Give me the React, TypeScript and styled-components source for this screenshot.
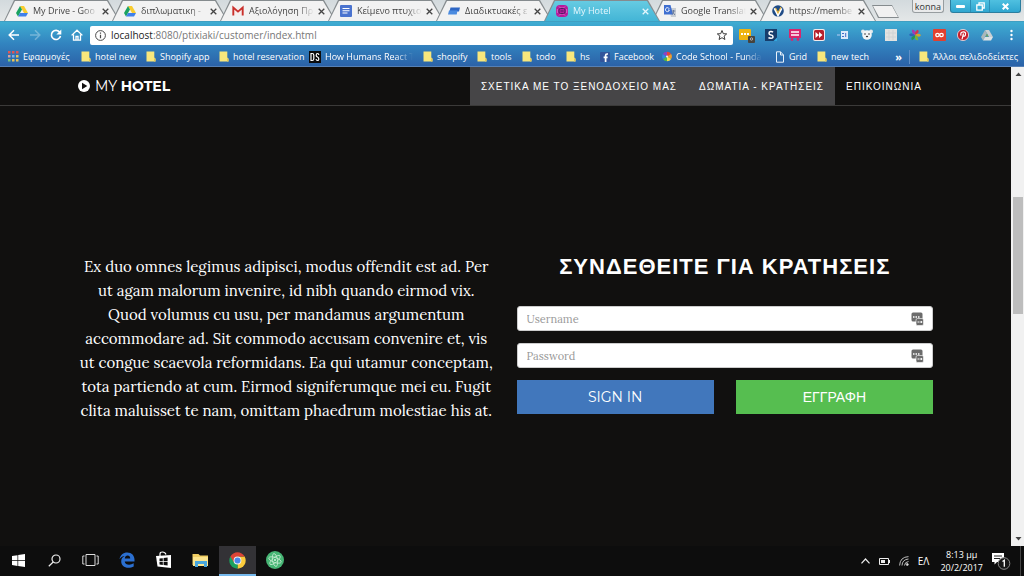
import React from "react";
import styled, { createGlobalStyle, css } from "styled-components";

const ui = `"Open Sans", "Noto Sans", sans-serif`;
const serif = `Lora, "Liberation Serif", serif`;
const display = `Montserrat, "Liberation Sans", sans-serif`;
const greek = `"Liberation Sans", sans-serif`;

const GlobalStyle = createGlobalStyle`
  *, *::before, *::after { box-sizing: border-box; }
  body { margin: 0; background: #11100f; }
  button { border: 0; padding: 0; background: none; font: inherit; color: inherit; }
  a { color: inherit; text-decoration: none; }
  svg { display: block; }
`;

const Desktop = styled.div`
  display: flex;
  flex-direction: column;
  min-height: 100vh;
  font-family: ${ui};
  font-size: 9px;
`;

/* Browser frame */
const TabStrip = styled.div`
  display: flex;
  height: 22px;
  padding-left: 4px;
  background: linear-gradient(#d3dadd, #e4e7e8);
  border-bottom: 1px solid #3f9fc2;
`;

const TabShell = styled.div<{ $active?: boolean }>`
  position: relative;
  z-index: ${(p) => (p.$active ? 2 : 1)};
  flex: 0 1 108px;
  min-width: 0;
  display: flex;
  align-items: center;
  padding: 1px 0 0 12px;
  color: ${(p) => (p.$active ? "#e4f7fd" : "#444")};

  &::before,
  &::after {
    content: "";
    position: absolute;
    z-index: -1;
    inset: 0 -8px 0 0;
    background: #858b8e;
    clip-path: polygon(0 100%, 10px 0, calc(100% - 12px) 0, 100% 100%);
  }
  &::after {
    inset: 1px -7px 0 1px;
    background: ${(p) => (p.$active ? "linear-gradient(#66cbe2, #43b5d6)" : "#f2f2f2")};
  }
`;

const TabTitle = styled.span`
  flex: 1;
  min-width: 0;
  margin-left: 5px;
  overflow: hidden;
  white-space: nowrap;
  line-height: 14px;
  mask-image: linear-gradient(90deg, #000 75%, transparent);
`;

const TabClose = styled.button`
  display: grid;
  place-items: center;
  width: 14px;
  height: 14px;
`;

const NewTab = styled.button`
  width: 27px;
  height: 13px;
  margin: 5px 0 0 4px;
  background: #858b8e;
  clip-path: polygon(0 0, 20px 0, 100% 100%, 6px 100%);

  &::before {
    content: "";
    display: block;
    height: 11px;
    margin: 0 1px;
    background: #f1f1f1;
    clip-path: polygon(0 0, 19px 0, 100% 100%, 6px 100%);
  }
`;

const UserChip = styled.button`
  && {
    height: 13px;
    margin-left: auto;
    padding: 0 2px;
    border: 1px solid #979da0;
    border-top: 0;
    border-radius: 0 0 3px 3px;
    background: #e9eaeb;
    color: #333;
    line-height: 11px;
  }
`;

const WindowControls = styled.div`
  display: flex;
  height: 13px;
  margin: 0 3px 0 6px;
  border: 1px solid #2b7e9f;
  border-top: 0;
  border-radius: 0 0 3px 3px;
  background: linear-gradient(#4fc0e0, #2fa6d0);
  color: #fff;
`;

const WindowButton = styled.button<{ $wide?: boolean }>`
  display: grid;
  place-items: center;
  width: ${(p) => (p.$wide ? 31 : 19)}px;

  & + & {
    border-left: 1px solid #2b8fb5;
  }
`;

const Chrome = styled.div`
  background: linear-gradient(#3fadd2, #3283bf 50%, #2b62a8);
  border-bottom: 1px solid #5580b5;
  color: #fff;
`;

const Toolbar = styled.div`
  display: flex;
  align-items: center;
  height: 25px;
  padding: 0 1px 0 3px;
`;

const ToolButton = styled.button<{ $w?: number }>`
  flex: none;
  display: grid;
  place-items: center;
  width: ${(p) => p.$w ?? 21}px;
  height: 24px;
`;

const AddressBar = styled.div`
  flex: 1;
  display: flex;
  align-items: center;
  height: 19px;
  margin: 1px 2px 0 3px;
  padding: 0 5px;
  gap: 5px;
  border-radius: 2px;
  background: #fff;
  color: #444;
`;

const AddressField = styled.span`
  flex: 1;
  color: #777;
  font-size: 10px;
  line-height: 18px;
`;

const Host = styled.span`
  color: #222;
`;

const BookmarksBar = styled.nav`
  display: flex;
  align-items: center;
  height: 19px;
  padding: 0 6px 0 8px;
`;

const Bookmark = styled.a<{ $w?: number; $fade?: boolean }>`
  flex: none;
  display: flex;
  align-items: center;
  gap: 4px;
  width: ${(p) => (p.$w ? `${p.$w}px` : "auto")};
  padding-right: ${(p) => (p.$fade ? 10 : 0)}px;
  white-space: nowrap;
  line-height: 16px;

  svg {
    flex: none;
  }
  span {
    ${(p) =>
      p.$fade &&
      css`
        overflow: hidden;
        mask-image: linear-gradient(90deg, #000 80%, transparent);
      `}
  }
`;

const MoreBookmarks = styled.button`
  margin-left: auto;
  padding-right: 7px;
  font-size: 11px;
  font-weight: 700;
  line-height: 16px;
`;

const BookmarkDivider = styled.i`
  width: 1px;
  height: 14px;
  margin-right: 9px;
  background: #5f8fc6;
`;

/* Web page */
const Viewport = styled.div`
  flex: 1;
  display: flex;
`;

const Page = styled.div`
  flex: 1;
  background: #11100f;
  color: #fff;
`;

const Container = styled.div`
  max-width: 877px;
  margin: 0 auto;
  padding: 0 11px;
`;

const SiteHeader = styled.header`
  border-bottom: 1px solid #3b3a39;
`;

const HeaderRow = styled(Container)`
  display: flex;
  align-items: center;
  justify-content: space-between;
  height: 38px;
`;

const Brand = styled.a`
  display: flex;
  align-items: center;
  gap: 5px;
  font-family: ${display};
  font-size: 14px;
  line-height: 20px;
`;

const SiteNav = styled.nav`
  display: flex;
  align-self: stretch;
`;

const NavLink = styled.a<{ $active?: boolean }>`
  display: flex;
  align-items: center;
  padding: 0 11px;
  background: ${(p) => (p.$active ? "#464547" : "transparent")};
  font-family: ${greek};
  font-size: 10px;
  letter-spacing: 1px;
  white-space: nowrap;
`;

const Columns = styled(Container)`
  display: grid;
  grid-template-columns: 1fr 1fr;
  gap: 22px;
  padding-top: 149px;
`;

const Intro = styled.p`
  margin: 0;
  font-family: ${serif};
  font-size: 15px;
  line-height: 24px;
  text-align: center;
`;

const LoginForm = styled.form`
  display: flex;
  flex-direction: column;
  gap: 12px;
`;

const Title = styled.h2`
  margin: 0 0 15px;
  font-family: ${greek};
  font-size: 22px;
  font-weight: 700;
  letter-spacing: 1px;
  line-height: 24px;
  text-align: center;
`;

const Field = styled.label`
  position: relative;
  display: block;
  height: 25px;

  svg {
    position: absolute;
    top: 6px;
    right: 9px;
  }
`;

const TextInput = styled.input`
  display: block;
  width: 100%;
  height: 25px;
  padding: 0 30px 0 9px;
  border: 1px solid #ccc;
  border-radius: 3px;
  background: #fff;
  color: #333;
  font-family: ${serif};
  font-size: 11px;

  &::placeholder {
    color: #999;
    opacity: 1;
  }
`;

const Actions = styled.div`
  display: grid;
  grid-template-columns: 1fr 1fr;
  gap: 22px;
`;

const ActionButton = styled.button<{ $tone: string }>`
  && {
    height: 34px;
    background: ${(p) => p.$tone};
    font-family: ${display};
    font-size: 14px;
  }
`;

const ScrollTrack = styled.div`
  display: grid;
  grid-template-rows: 14px 116fr 117fr 218fr 14px;
  justify-items: center;
  width: 13px;
  padding-left: 1px;
  background: #f1f1f1;

  svg {
    align-self: center;
  }
  svg:last-child {
    grid-row: 5;
  }
`;

const ScrollThumb = styled.div`
  grid-row: 3;
  width: 10px;
  background: #bdbdbd;
`;

/* Windows taskbar */
const Taskbar = styled.footer`
  display: flex;
  height: 30px;
  background: #0d0d0d;
  color: #fff;
`;

const TaskGroup = styled.div`
  display: flex;
`;

const TaskButton = styled.button<{ $active?: boolean; $app?: boolean }>`
  && {
    display: grid;
    place-items: center;
    width: ${(p) => (p.$app ? 37 : 36)}px;
    background: ${(p) => (p.$active ? "#333236" : "transparent")};
    border-bottom: 2px solid ${(p) => (p.$active ? "#76b9ed" : "transparent")};
  }
`;

const Tray = styled.div`
  display: flex;
  align-items: center;
  gap: 9px;
  margin-left: auto;
  padding-right: 3px;
`;

const Language = styled.span`
  font-size: 10px;
`;

const Clock = styled.div`
  margin-left: 2px;
  line-height: 13px;
  text-align: center;
`;

const ShowDesktop = styled.i`
  width: 1px;
  height: 100%;
  background: #444;
`;

/* Icons */
const Drive = ({ grey = false }) => (
  <svg width="12" height="12" viewBox="0 0 12 12">
    <path d="M4 1h4l4 7H8z" fill={grey ? "#c9d0d3" : "#f9cc2e"} />
    <path d="M4 1l2 3.6L2 11.4 0 8z" fill={grey ? "#a9b7bb" : "#1aa260"} />
    <path d="M4 8h8l-2 3.4H2z" fill={grey ? "#dde2e4" : "#3f80ea"} />
    {grey && <path d="M4.6 7.6l1.4-3 1.5 3z" fill="#79a35c" />}
  </svg>
);
const Gmail = () => (
  <svg width="12" height="12" viewBox="0 0 12 12">
    <path d="M1 2h10v8H1z" fill="#f7eeee" />
    <path d="M1.3 10.5V2.6L6 6.6l4.7-4v7.9" fill="none" stroke="#c9302c" strokeWidth="1.9" />
  </svg>
);
const Docs = () => (
  <svg width="12" height="12" viewBox="0 0 12 12">
    <rect width="12" height="12" rx="1" fill="#4a73cf" />
    <path d="M2.5 3.5h7M2.5 5.7h7M2.5 8h5" stroke="#fff" strokeWidth="1.1" />
  </svg>
);
const Slabs = () => (
  <svg width="12" height="12" viewBox="0 0 12 12">
    <path d="M2.5 2.5H12L11 6.500H1.500z" fill="#2e66c4" />
    <path d="M1 5.500h8.500L8.700 9.500H0z" fill="#4b8be0" />
  </svg>
);
const Hotel = () => (
  <svg width="12" height="12" viewBox="0 0 12 12">
    <rect width="12" height="12" rx="4" fill="#b81a9c" />
    <path d="M3 1.500L4.500 3h3L9 1.500M3 10.500L4.500 9h3L9 10.500M1.300 4v4M10.700 4v4" fill="none" stroke="#e68bd8" strokeWidth=".7" />
    <rect x="3" y="3.500" width="6" height="5" rx="1.500" fill="none" stroke="#4b2160" />
    <path d="M4.500 6h3" stroke="#4b2160" />
  </svg>
);
const Translate = () => (
  <svg width="12" height="12" viewBox="0 0 12 12">
    <path d="M5 3h7v9H7z" fill="#c8cdd3" />
    <path d="M0 0h6.500L9 9.500H0z" fill="#3f6fd0" />
    <path d="M5.200 3.700A2 2 0 1 0 5.400 5H4" fill="none" stroke="#fff" strokeWidth=".9" />
    <path d="M7.800 6h3.500M9.500 5v1c0 1.500-.6 2.700-1.200 3.500M8.800 7l2 3" fill="none" stroke="#5c6f94" strokeWidth=".8" />
  </svg>
);
const Vbadge = () => (
  <svg width="12" height="12" viewBox="0 0 12 12">
    <circle cx="6" cy="6" r="5.800" fill="#1f4b86" />
    <path d="M2.500 3.300L6 10l3.500-6.700" fill="none" stroke="#fff" strokeWidth="2.200" />
    <path d="M3.500 3l2.500 5 3-6" fill="none" stroke="#e9b53a" strokeWidth="1.100" />
  </svg>
);
const Cross = ({ w = 1.3 }) => (
  <svg width="7" height="7" viewBox="0 0 7 7" stroke="currentColor" strokeWidth={w}>
    <path d="M.7.7l5.600 5.600M6.300.7L.7 6.300" />
  </svg>
);
const Folder = () => (
  <svg width="10" height="11" viewBox="0 0 10 11">
    <path d="M.5.5h7.800v6l1.200 1v3h-9z" fill="#f8e77c" />
    <path d="M8 7l1.500 1v2.500H8z" fill="#e3c95a" />
  </svg>
);
const AppsGrid = () => (
  <svg width="11" height="11" viewBox="0 0 11 11">
    {["#e05555", "#e05555", "#e05555", "#d9a1a1", "#7fb0e8", "#e7c35a", "#7cc47a", "#e7c35a", "#e7c35a"].map((c, i) => (
      <rect key={i} x={(i % 3) * 4} y={Math.floor(i / 3) * 4} width="2.500" height="2.500" fill={c} />
    ))}
  </svg>
);
const Ds = () => (
  <svg width="12" height="12" viewBox="0 0 12 12">
    <rect width="12" height="12" fill="#0b0b0b" />
    <path d="M2 2.500h1.200q1.600 0 1.600 1.800v3.400q0 1.800-1.600 1.800H2zM9.800 4q0-1.500-1.300-1.500T7.200 4.200Q7.200 5.400 8.500 6t1.300 1.900q0 1.600-1.300 1.600T7.100 8" fill="none" stroke="#fff" strokeWidth="1.200" />
  </svg>
);
const Facebook = () => (
  <svg width="10" height="12" viewBox="0 0 10 12">
    <rect y="1" width="10" height="10" rx="1" fill="#33549b" />
    <path d="M8 3H7Q5.600 3 5.600 4.500V11M3.600 6.300h4" fill="none" stroke="#fff" strokeWidth="1.700" />
  </svg>
);
const wedges = ["#e8413a", "#f59c27", "#f6e04b", "#4fb84c", "#2f8be0", "#8a44c4"];
const Wheel = () => (
  <svg width="10" height="11" viewBox="-6 -6 12 12">
    {wedges.map((c, i) => (
      <path key={c} d="M0 0L0-5.800A5.800 5.800 0 0 1 5-2.900z" fill={c} transform={`rotate(${i * 60})`} />
    ))}
    <circle r="1.200" fill="#e9f0f5" />
  </svg>
);
const petals = ["#d8334a", "#d9a52c", "#79b33a", "#23935a", "#2f62b8", "#a03cb4"];
const Pinwheel = () => (
  <svg width="12" height="12" viewBox="-6 -6 12 12">
    {petals.map((c, i) => (
      <path key={c} d="M0 0Q-2.500-3 0-6Q3.500-4.500 0 0z" fill={c} transform={`rotate(${i * 60 + 30})`} />
    ))}
  </svg>
);
const FileIcon = () => (
  <svg width="10" height="12" viewBox="0 0 10 12" fill="none" stroke="#e8f1fa">
    <path d="M1.500.8h4L8.500 4v7.200h-7zM5.500.8V4h3" />
  </svg>
);
const Back = ({ dim = false }) => (
  <svg width="12" height="12" viewBox="0 0 12 12" fill="none" stroke="#fff" strokeWidth="1.500" opacity={dim ? 0.3 : 1}>
    <path d={dim ? "M1 6h9.500M6 1.200L10.800 6 6 10.800" : "M11 6H1.500M6 1.200L1.200 6 6 10.800"} />
  </svg>
);
const Reload = () => (
  <svg width="12" height="12" viewBox="0 0 12 12">
    <path d="M9.800 3.300A4.600 4.600 0 1 0 10.500 7" fill="none" stroke="#fff" strokeWidth="1.600" />
    <path d="M11.300.6v4.900H6.400z" fill="#fff" />
  </svg>
);
const Home = () => (
  <svg width="12" height="12" viewBox="0 0 12 12" fill="none" stroke="#fff" strokeWidth="1.300">
    <path d="M.6 6.400L6 1.200l5.400 5.200M2.500 5.500v5.700h7V5.500M5 11V7.500h2V11" />
  </svg>
);
const Info = () => (
  <svg width="11" height="11" viewBox="0 0 11 11" fill="none" stroke="#4a4a4a">
    <circle cx="5.500" cy="5.500" r="4.900" />
    <path d="M5.500 4.800v3.500M5.500 2.600v1.200" strokeWidth="1.200" />
  </svg>
);
const Star = () => (
  <svg width="12" height="12" viewBox="0 0 12 12" fill="none" stroke="#3b3b3b">
    <path d="M6 1.500l1.300 3.200 3.400.2-2.600 2.200.8 3.400L6 8.700l-2.900 1.800.8-3.400-2.600-2.200 3.400-.2z" />
  </svg>
);
const extensions: [string, React.ReactNode][] = [
  ["Passwords", <svg key="a" width="17" height="16" viewBox="0 0 17 16"><rect width="12" height="11" y="2" rx="1" fill="#efb410" /><path d="M2 7h2M5 7h2M8 7h2" stroke="#fff" strokeWidth="2" /><rect x="9" y="9" width="7" height="7" rx="1" fill="#47433d" /><circle cx="12.500" cy="12" r="1.200" fill="none" stroke="#ccc" strokeWidth=".8" /></svg>],
  ["S", <svg key="b" width="12" height="12" viewBox="0 0 12 12"><rect width="12" height="12" fill="#173d6b" /><path d="M8 3.200Q7 2.200 5.500 2.500T4 4.300 6 6t2 1.800T6 9.300 3.500 8.500" fill="none" stroke="#fff" strokeWidth="1.500" /><path d="M8.500 12L12 8.500V12z" fill="#35a8e0" /></svg>],
  ["Cart", <svg key="c" width="12" height="12" viewBox="0 0 12 12"><path d="M0 0h12v9H0z" fill="#d8266c" /><path d="M2 3h8M2 6h8" stroke="#fff" strokeWidth="1.300" /><circle cx="3" cy="10.500" r="1.400" fill="#d8266c" /><circle cx="9" cy="10.500" r="1.400" fill="#d8266c" /></svg>],
  ["Forward", <svg key="d" width="12" height="12" viewBox="0 0 12 12"><rect width="12" height="12" rx="2" fill="#f3e9ea" /><rect x="1" y="1" width="10" height="10" rx="1.500" fill="#b5202c" /><path d="M2.500 3v6L6 6zM6 3v6l3.500-3z" fill="#fff" /></svg>],
  ["Panels", <svg key="e" width="12" height="10" viewBox="0 0 12 10"><path d="M0 5h3" stroke="#8fbbe6" strokeWidth="1.500" /><rect x="4" y="1" width="7" height="8" fill="#dcebfa" /><path d="M5 3.500h2M5 6.500h2M8.700 3v4" stroke="#3f6fc8" /></svg>],
  ["Bear", <svg key="f" width="12" height="11" viewBox="0 0 12 11"><circle cx="2" cy="2.500" r="2" fill="#e3eaee" /><circle cx="10" cy="2.500" r="2" fill="#e3eaee" /><circle cx="6" cy="6" r="4.800" fill="#f3f5f6" /><circle cx="4" cy="5" r=".8" fill="#333" /><circle cx="8" cy="5" r=".8" fill="#333" /><ellipse cx="6" cy="7.500" rx="1.200" ry=".8" fill="#333" /></svg>],
  ["Grid", <svg key="g" width="12" height="12" viewBox="0 0 12 12"><rect width="12" height="12" fill="#e2e2e0" /><path d="M4 1v10M8 1v10M1 4h10M1 8h10" stroke="#d0d4d5" /></svg>],
  ["Colours", <Pinwheel key="h" />],
  ["Loop", <svg key="i" width="13" height="12" viewBox="0 0 13 12"><rect width="13" height="12" rx="1" fill="#e2402f" /><circle cx="4.500" cy="6" r="1.700" fill="none" stroke="#fff" strokeWidth="1.300" /><circle cx="8.500" cy="6" r="1.700" fill="none" stroke="#fff" strokeWidth="1.300" /></svg>],
  ["Pinterest", <svg key="j" width="12" height="12" viewBox="0 0 12 12"><circle cx="6" cy="6" r="5.600" fill="#c8202c" stroke="#f0dfe2" strokeWidth=".8" /><path d="M4 6.700Q3 3 6.200 2.800T8.300 6.300Q7.300 7.800 6 6.800M6.500 4.500L5 10.300" fill="none" stroke="#fff" strokeWidth="1.200" /></svg>],
  ["Drive", <Drive key="k" grey />],
];
const SavedLogin = () => (
  <svg width="13" height="14" viewBox="0 0 13 14">
    <rect width="11" height="9" x=".5" y=".5" rx="1.500" fill="#6b6b6b" />
    <path d="M2 5h1.500M4.500 5H6M7 5h1.500" stroke="#fff" strokeWidth="1.300" />
    <rect x="5" y="6.500" width="7.500" height="7" rx="1.500" fill="#6b6b6b" stroke="#fff" strokeWidth=".6" />
    <path d="M6.500 10h2M9.300 10h2M10.300 9v2" stroke="#fff" />
  </svg>
);
const PlayCircle = () => (
  <svg width="12" height="12" viewBox="0 0 12 12">
    <circle cx="6" cy="6" r="6" fill="#fff" />
    <path d="M4 2.800v6.400L9.300 6z" fill="#11100f" />
  </svg>
);
const Edge = () => (
  <svg width="16" height="16" viewBox="0 0 16 16">
    <path d="M.5 7.300C1.300 3 4.300.4 8.200.4c4.600 0 7.300 3.100 7.300 7.400v1.600H5.700c.3 2.400 2.200 3.300 4.400 3.300 1.700 0 3.100-.5 4.600-1.400v3.200c-1.500.9-3.300 1.300-5.300 1.300-4.300 0-7.200-2.500-7.200-6.500C2.200 6.900 3.500 5 5.600 4 3.400 4.200 1.700 5.300.5 7.300zM5.800 6.500h5.400c0-1.900-1-2.900-2.600-2.900-1.500 0-2.600 1.200-2.800 2.900z" fill="#2b6fd0" />
  </svg>
);
const Store = () => (
  <svg width="17" height="18" viewBox="0 0 17 18">
    <path d="M5 5V3q0-2 2.500-2T11 3.500" fill="none" stroke="#fff" strokeWidth="1.200" />
    <path d="M1 5l15-1v13L2.500 15.500z" fill="#fff" />
    <path d="M4.500 7.600l3.300-.4v3H4.500zM8.600 7.100l4-.5v3.600h-4zM4.500 11h3.300v3l-3.300-.4zM8.600 11h4v3.600l-4-.5z" fill="#0d0d0d" />
  </svg>
);
const Explorer = () => (
  <svg width="17" height="15" viewBox="0 0 17 15">
    <path d="M.5 1h6l1.500 1.500h8V12H.5z" fill="#f0cd62" />
    <path d="M1 4h15v9H1z" fill="#fbe48d" />
    <path d="M3 8h12v6h-3v-3H6v3H3z" fill="#49a6dc" />
  </svg>
);
const ChromeLogo = () => (
  <svg width="17" height="17" viewBox="-8.500 -8.500 17 17">
    <path d="M0 0L7.100-4.100A8.200 8.200 0 0 1 0 8.200z" fill="#fbcb3c" />
    <path d="M0 0L0 8.200A8.200 8.200 0 0 1-7.100-4.100z" fill="#1ba15f" />
    <path d="M0-4H7.100L3.500 2z" fill="#fbcb3c" />
    <path d="M0-4H7.100A8.200 8.200 0 0 0-7.100-4.100L-3.500 2z" fill="#dc4437" />
    <circle r="3.900" fill="#f1f1f1" />
    <circle r="3" fill="#4a86ea" />
  </svg>
);
const Atom = () => (
  <svg width="18" height="18" viewBox="-9 -9 18 18">
    <circle r="9" fill="#46b574" />
    <g fill="none" stroke="#c5ebd1" strokeWidth=".8">
      {[20, 80, 140].map((a) => (
        <ellipse key={a} rx="6.500" ry="2.500" transform={`rotate(${a})`} />
      ))}
    </g>
    <circle r="1" fill="#d7f2df" />
  </svg>
);
const Arrow = ({ down = false }) => (
  <svg width="7" height="4" viewBox="0 0 7 4">
    <path d={down ? "M.5 0h6l-3 3.500z" : "M.5 4h6l-3-3.500z"} fill="#444" />
  </svg>
);

const tabs: { title: string; icon: React.ReactNode; active?: boolean }[] = [
  { title: "My Drive - Goo", icon: <Drive /> },
  { title: "διπλωματικη -", icon: <Drive /> },
  { title: "Αξιολόγηση Πρ", icon: <Gmail /> },
  { title: "Κείμενο πτυχιο", icon: <Docs /> },
  { title: "Διαδικτυακές ε", icon: <Slabs /> },
  { title: "My Hotel", icon: <Hotel />, active: true },
  { title: "Google Translat", icon: <Translate /> },
  { title: "https://membe", icon: <Vbadge /> },
];

const bookmarks: { label: string; icon: React.ReactNode; width: number; fade?: boolean }[] = [
  { label: "Εφαρμογές", icon: <AppsGrid />, width: 73 },
  { label: "hotel new", icon: <Folder />, width: 65 },
  { label: "Shopify app", icon: <Folder />, width: 73 },
  { label: "hotel reservation", icon: <Folder />, width: 90 },
  { label: "How Humans React To", icon: <Ds />, width: 114, fade: true },
  { label: "shopify", icon: <Folder />, width: 54 },
  { label: "tools", icon: <Folder />, width: 45 },
  { label: "todo", icon: <Folder />, width: 44 },
  { label: "hs", icon: <Folder />, width: 34 },
  { label: "Facebook", icon: <Facebook />, width: 62 },
  { label: "Code School - Funda", icon: <Wheel />, width: 113, fade: true },
  { label: "Grid", icon: <FileIcon />, width: 42 },
  { label: "new tech", icon: <Folder />, width: 56 },
];

export default function App() {
  return (
    <Desktop>
      <GlobalStyle />
      <TabStrip>
        {tabs.map((t) => (
          <TabShell key={t.title} $active={t.active}>
            {t.icon}
            <TabTitle>{t.title}</TabTitle>
            <TabClose aria-label="Close tab"><Cross /></TabClose>
          </TabShell>
        ))}
        <NewTab aria-label="New tab" />
        <UserChip>konna</UserChip>
        <WindowControls>
          <WindowButton aria-label="Minimise">
            <svg width="9" height="4"><rect width="9" height="3" y="1" rx="1" fill="#fff" /></svg>
          </WindowButton>
          <WindowButton aria-label="Restore">
            <svg width="9" height="9" viewBox="0 0 9 9" fill="none" stroke="#fff" strokeWidth="1.300"><path d="M3 2.500V.8h5.200V6H6.500M.8 3h5.500v5.200H.8z" /></svg>
          </WindowButton>
          <WindowButton $wide aria-label="Close window"><Cross w={2} /></WindowButton>
        </WindowControls>
      </TabStrip>

      <Chrome>
        <Toolbar>
          <ToolButton aria-label="Back"><Back /></ToolButton>
          <ToolButton aria-label="Forward"><Back dim /></ToolButton>
          <ToolButton aria-label="Reload"><Reload /></ToolButton>
          <ToolButton aria-label="Home"><Home /></ToolButton>
          <AddressBar>
            <Info />
            <AddressField role="textbox" aria-label="Address">
              <Host>localhost</Host>:8080/ptixiaki/customer/index.html
            </AddressField>
            <Star />
          </AddressBar>
          {extensions.map(([name, icon]) => (
            <ToolButton key={name} $w={24} aria-label={name}>{icon}</ToolButton>
          ))}
          <ToolButton $w={24} aria-label="Menu">
            <svg width="3" height="12" fill="#fff"><circle cx="1.500" cy="2" r="1.200" /><circle cx="1.500" cy="6" r="1.200" /><circle cx="1.500" cy="10" r="1.200" /></svg>
          </ToolButton>
        </Toolbar>
        <BookmarksBar>
          {bookmarks.map((b) => (
            <Bookmark key={b.label} href="#" $w={b.width} $fade={b.fade}>
              {b.icon}
              <span>{b.label}</span>
            </Bookmark>
          ))}
          <MoreBookmarks>»</MoreBookmarks>
          <BookmarkDivider />
          <Bookmark href="#"><Folder /><span>Άλλοι σελιδοδείκτες</span></Bookmark>
        </BookmarksBar>
      </Chrome>

      <Viewport>
        <Page>
          <SiteHeader>
            <HeaderRow>
              <Brand href="#">
                <PlayCircle />
                <span>MY <b>HOTEL</b></span>
              </Brand>
              <SiteNav>
                <NavLink href="#" $active>ΣΧΕΤΙΚΑ ΜΕ ΤΟ ΞΕΝΟΔΟΧΕΙΟ ΜΑΣ</NavLink>
                <NavLink href="#" $active>ΔΩΜΑΤΙΑ - ΚΡΑΤΗΣΕΙΣ</NavLink>
                <NavLink href="#">ΕΠΙΚΟΙΝΩΝΙΑ</NavLink>
              </SiteNav>
            </HeaderRow>
          </SiteHeader>
          <Columns as="main">
            <Intro>
              Ex duo omnes legimus adipisci, modus offendit est ad. Per ut agam malorum invenire, id
              nibh quando eirmod vix. Quod volumus cu usu, per mandamus argumentum accommodare ad.
              Sit commodo accusam convenire et, vis ut congue scaevola reformidans. Ea qui utamur
              conceptam, tota partiendo at cum. Eirmod signiferumque mei eu. Fugit clita maluisset te
              nam, omittam phaedrum molestiae his at.
            </Intro>
            <LoginForm onSubmit={(e) => e.preventDefault()}>
              <Title>ΣΥΝΔΕΘΕΙΤΕ ΓΙΑ ΚΡΑΤΗΣΕΙΣ</Title>
              <Field>
                <TextInput type="text" placeholder="Username" aria-label="Username" />
                <SavedLogin />
              </Field>
              <Field>
                <TextInput type="password" placeholder="Password" aria-label="Password" />
                <SavedLogin />
              </Field>
              <Actions>
                <ActionButton type="submit" $tone="#4177bc">SIGN IN</ActionButton>
                <ActionButton type="button" $tone="#56be50">ΕΓΓΡΑΦΗ</ActionButton>
              </Actions>
            </LoginForm>
          </Columns>
        </Page>
        <ScrollTrack>
          <Arrow />
          <ScrollThumb />
          <Arrow down />
        </ScrollTrack>
      </Viewport>

      <Taskbar>
        <TaskGroup>
          <TaskButton aria-label="Start">
            <svg width="13" height="13" viewBox="0 0 13 13" fill="#fff"><path d="M0 2l5.500-.8v5H0zM6.200 1L13 0v6.200H6.200zM0 6.900h5.500v5L0 11.100zM6.200 6.900H13V13l-6.800-1z" /></svg>
          </TaskButton>
          <TaskButton aria-label="Search">
            <svg width="13" height="13" viewBox="0 0 13 13" fill="none" stroke="#eee" strokeWidth="1.200"><circle cx="8" cy="5" r="4" /><path d="M5.200 8L.8 12.300" /></svg>
          </TaskButton>
          <TaskButton aria-label="Task view">
            <svg width="17" height="12" viewBox="0 0 17 12" fill="none" stroke="#ddd"><path d="M4 .5h9v11H4zM2.500 2H.8v8h1.700M14.500 2h1.700v8h-1.700" /></svg>
          </TaskButton>
        </TaskGroup>
        <TaskGroup>
          <TaskButton $app aria-label="Edge"><Edge /></TaskButton>
          <TaskButton $app aria-label="Store"><Store /></TaskButton>
          <TaskButton $app aria-label="Files"><Explorer /></TaskButton>
          <TaskButton $app $active aria-label="Chrome"><ChromeLogo /></TaskButton>
          <TaskButton $app aria-label="Atom"><Atom /></TaskButton>
        </TaskGroup>
        <Tray>
          <svg width="9" height="6" viewBox="0 0 9 6" fill="none" stroke="#eee" strokeWidth="1.200"><path d="M.5 5.300l4-4.300 4 4.300" /></svg>
          <svg width="11" height="7" viewBox="0 0 11 7"><path d="M.5.5h9v6h-9z" fill="none" stroke="#eee" /><path d="M2 2h4v3H2zM10 2h1v3h-1z" fill="#eee" /></svg>
          <svg width="10" height="10" viewBox="0 0 10 10" fill="none" stroke="#bbb"><path d="M.6 9.500Q1 1 9.500.6M3 9.500Q3.300 3.500 9.500 3M5.500 9.500Q5.700 6 9.500 5.500" /><circle cx="8.300" cy="8.500" r="1" fill="#eee" /></svg>
          <Language>ΕΛ</Language>
          <Clock>8:13 μμ<br />20/2/2017</Clock>
          <svg width="19" height="18" viewBox="0 0 19 18">
            <path d="M0 1h12v9H5L2.500 12.500V10H0z" fill="#fff" />
            <path d="M2 4h8M2 6.500h6" stroke="#222" />
            <circle cx="12" cy="11.500" r="5.800" fill="#161616" stroke="#888" />
            <path d="M10.500 9.500L12.300 8.300v6.500" fill="none" stroke="#fff" strokeWidth="1.300" />
          </svg>
          <ShowDesktop />
        </Tray>
      </Taskbar>
    </Desktop>
  );
}
